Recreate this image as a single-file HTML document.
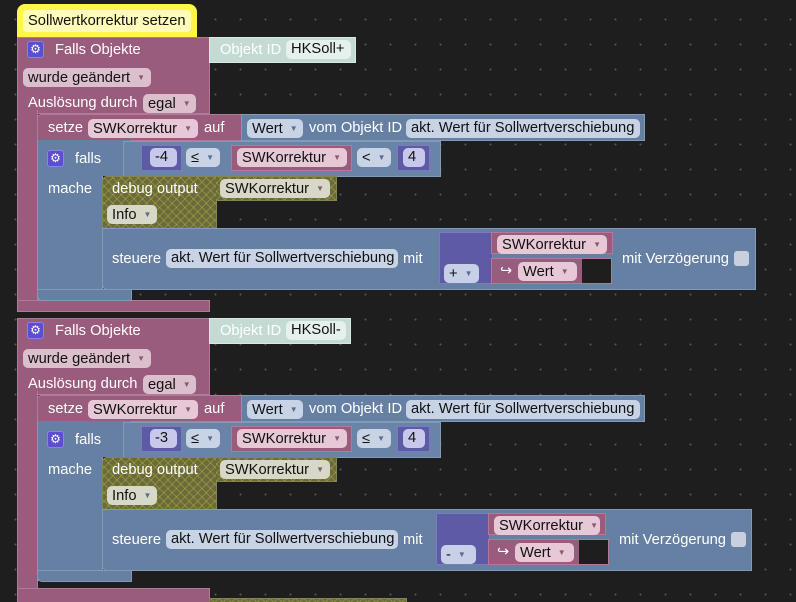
<!DOCTYPE html>
<html><head><meta charset="utf-8"><style>
*{margin:0;padding:0;box-sizing:border-box}
body{width:796px;height:602px;overflow:hidden;background:#1e1e1e;font-family:"Liberation Sans",sans-serif;font-size:14.7px;color:#fff;position:relative;
background-image:radial-gradient(circle,#555 0.8px,transparent 1.2px);background-size:25px 25px;background-position:3px 7px}
div{position:absolute}
.t{white-space:nowrap;line-height:20px}
.pk{background:#9a5c7c;border:1px solid #b27a96}
.bl{background:#6680a4;border:1px solid #8299ba}
.pu{background:#5d5ba6;border:1px solid #7b79c0}
.ol{background-color:#6a6a3c;background-image:repeating-linear-gradient(45deg,rgba(200,200,60,.35) 0 1px,transparent 1px 6px),repeating-linear-gradient(-45deg,rgba(200,200,60,.35) 0 1px,transparent 1px 6px);border:1px solid #85854f}
.f{border-radius:5px;color:#111;line-height:19px;height:19px;padding-left:5px;white-space:nowrap;overflow:hidden}
.fp{background:#e6c8d6}
.fb{background:#c8d4e6}
.fo{background:#d8d8c8}
.fg{background:#e6f0ec}
.ar{font-size:8px;color:#8a5a74;margin-left:7px;vertical-align:2px}
.ab{font-size:8px;color:#5a6d90;margin-left:7px;vertical-align:2px}
.gear{width:17px;height:17px;background:#5b4fd0;border:1px solid #8a80ee;border-radius:3px;color:#fff;font-size:12px;line-height:15px;text-align:center}
</style></head><body>

<div style="left:17px;top:4px;width:180px;height:34px;background:#fff646;border-radius:8px 8px 0 0"></div>
<div style="left:23px;top:10px;width:168px;height:22px;background:#fffbb8;border-radius:4px"></div>
<div class="t" style="left:28px;top:11px;color:#111">Sollwertkorrektur setzen</div>

<div style="left:0;top:0;width:796px;height:320px">
<div class="pk" style="left:17px;top:37px;width:193px;height:77px"></div>
<div class="pk" style="left:17px;top:110px;width:21px;height:200px;border-top:none"></div>
<div class="pk" style="left:17px;top:300px;width:193px;height:12px"></div>
<div class="gear" style="left:27px;top:41px">⚙</div>
<div class="t" style="left:55px;top:40px">Falls Objekte</div>
<div style="left:209px;top:37px;width:147px;height:26px;background:#c4dbd3;border:1px solid #d8e8e2"></div>
<div class="t" style="left:220px;top:40px">Objekt ID</div>
<div class="f fg" style="left:286px;top:40px;width:65px">HKSoll+</div>
<div class="f fp" style="left:23px;top:68px;width:128px;background:#dbbfcd">wurde geändert<span class="ar">▼</span></div>
<div class="t" style="left:28px;top:93px">Auslösung durch</div>
<div class="f fp" style="left:143px;top:94px;width:53px;background:#dbbfcd">egal<span class="ar">▼</span></div>
<div class="pk" style="left:37px;top:114px;width:205px;height:27px;border-radius:4px 0 0 0"></div>
<div class="t" style="left:48px;top:118px">setze</div>
<div class="f fp" style="left:88px;top:119px;width:110px">SWKorrektur<span class="ar">▼</span></div>
<div class="t" style="left:204px;top:118px">auf</div>
<div class="bl" style="left:241px;top:114px;width:404px;height:27px"></div>
<div class="f fb" style="left:247px;top:119px;width:56px">Wert<span class="ab">▼</span></div>
<div class="t" style="left:309px;top:118px">vom Objekt ID</div>
<div class="f fb" style="left:406px;top:119px;width:234px">akt. Wert für Sollwertverschiebung</div>
<div class="bl" style="left:37px;top:140px;width:66px;height:160px;border-top:none"></div>
<div class="bl" style="left:37px;top:140px;width:95px;height:36px;border-top:none;border-bottom:none"></div>
<div class="bl" style="left:37px;top:289px;width:95px;height:12px;border-radius:0 0 0 5px"></div>
<div class="gear" style="left:47px;top:150px">⚙</div>
<div class="t" style="left:75px;top:149px">falls</div>
<div class="t" style="left:48px;top:179px">mache</div>
<div class="bl" style="left:123px;top:141px;width:318px;height:36px;background:#6a84a8"></div>
<div class="pu" style="left:141px;top:145px;width:41px;height:26px"></div>
<div class="f" style="left:150px;top:148px;width:27px;background:#c8c8ea">-4</div>
<div class="f fb" style="left:186px;top:148px;width:34px">≤<span class="ab">▼</span></div>
<div class="pk" style="left:231px;top:145px;width:121px;height:26px"></div>
<div class="f fp" style="left:237px;top:148px;width:110px">SWKorrektur<span class="ar">▼</span></div>
<div class="f fb" style="left:357px;top:148px;width:34px">&lt;<span class="ab">▼</span></div>
<div class="pu" style="left:397px;top:145px;width:33px;height:26px"></div>
<div class="f" style="left:403px;top:148px;width:22px;background:#c8c8ea">4</div>
<div class="ol" style="left:102px;top:176px;width:115px;height:53px;border-radius:5px 0 0 0"></div>
<div class="ol" style="left:216px;top:176px;width:121px;height:25px;border-left:none"></div>
<div class="t" style="left:112px;top:179px">debug output</div>
<div class="f fo" style="left:220px;top:179px;width:110px">SWKorrektur<span class="ar">▼</span></div>
<div class="f fo" style="left:107px;top:205px;width:50px">Info<span class="ab">▼</span></div>
<div class="bl" style="left:102px;top:228px;width:654px;height:62px;border-radius:0 0 0 5px"></div>
<div class="t" style="left:112px;top:249px">steuere</div>
<div class="f fb" style="left:166px;top:249px;width:232px">akt. Wert für Sollwertverschiebung</div>
<div class="t" style="left:403px;top:249px">mit</div>
<div class="pu" style="left:439px;top:232px;width:54px;height:52px"></div>
<div class="f" style="left:444px;top:264px;width:35px;background:#c8d0e8">+<span class="ab">▼</span></div>
<div class="pk" style="left:491px;top:232px;width:122px;height:22px"></div>
<div class="f fp" style="left:497px;top:235px;width:110px">SWKorrektur<span class="ar">▼</span></div>
<div class="pk" style="left:491px;top:258px;width:92px;height:26px"></div>
<div style="left:582px;top:258px;width:30px;height:26px;background:#1e1e1e;border:1px solid #b27a96;border-left:none"></div>
<div class="t" style="left:500px;top:261px">↪</div>
<div class="f fp" style="left:518px;top:262px;width:59px">Wert<span class="ar">▼</span></div>
<div class="t" style="left:622px;top:249px">mit Verzögerung</div>
<div style="left:734px;top:251px;width:15px;height:15px;background:#c8d0e0;border-radius:3px"></div>
</div>

<div style="left:0;top:281px;width:796px;height:321px;overflow:hidden">
<div class="pk" style="left:17px;top:37px;width:193px;height:77px"></div>
<div class="pk" style="left:17px;top:110px;width:21px;height:200px;border-top:none"></div>
<div class="pk" style="left:17px;top:307px;width:193px;height:16px"></div>
<div class="gear" style="left:27px;top:41px">⚙</div>
<div class="t" style="left:55px;top:40px">Falls Objekte</div>
<div style="left:209px;top:37px;width:142px;height:26px;background:#c4dbd3;border:1px solid #d8e8e2"></div>
<div class="t" style="left:220px;top:40px">Objekt ID</div>
<div class="f fg" style="left:286px;top:40px;width:60px">HKSoll-</div>
<div class="f fp" style="left:23px;top:68px;width:128px;background:#dbbfcd">wurde geändert<span class="ar">▼</span></div>
<div class="t" style="left:28px;top:93px">Auslösung durch</div>
<div class="f fp" style="left:143px;top:94px;width:53px;background:#dbbfcd">egal<span class="ar">▼</span></div>
<div class="pk" style="left:37px;top:114px;width:205px;height:27px;border-radius:4px 0 0 0"></div>
<div class="t" style="left:48px;top:118px">setze</div>
<div class="f fp" style="left:88px;top:119px;width:110px">SWKorrektur<span class="ar">▼</span></div>
<div class="t" style="left:204px;top:118px">auf</div>
<div class="bl" style="left:241px;top:114px;width:404px;height:27px"></div>
<div class="f fb" style="left:247px;top:119px;width:56px">Wert<span class="ab">▼</span></div>
<div class="t" style="left:309px;top:118px">vom Objekt ID</div>
<div class="f fb" style="left:406px;top:119px;width:234px">akt. Wert für Sollwertverschiebung</div>
<div class="bl" style="left:37px;top:140px;width:66px;height:160px;border-top:none"></div>
<div class="bl" style="left:37px;top:140px;width:95px;height:36px;border-top:none;border-bottom:none"></div>
<div class="bl" style="left:37px;top:289px;width:95px;height:12px;border-radius:0 0 0 5px"></div>
<div class="gear" style="left:47px;top:150px">⚙</div>
<div class="t" style="left:75px;top:149px">falls</div>
<div class="t" style="left:48px;top:179px">mache</div>
<div class="bl" style="left:123px;top:141px;width:318px;height:36px;background:#6a84a8"></div>
<div class="pu" style="left:141px;top:145px;width:41px;height:26px"></div>
<div class="f" style="left:150px;top:148px;width:27px;background:#c8c8ea">-3</div>
<div class="f fb" style="left:186px;top:148px;width:34px">≤<span class="ab">▼</span></div>
<div class="pk" style="left:231px;top:145px;width:121px;height:26px"></div>
<div class="f fp" style="left:237px;top:148px;width:110px">SWKorrektur<span class="ar">▼</span></div>
<div class="f fb" style="left:357px;top:148px;width:34px">≤<span class="ab">▼</span></div>
<div class="pu" style="left:397px;top:145px;width:33px;height:26px"></div>
<div class="f" style="left:403px;top:148px;width:22px;background:#c8c8ea">4</div>
<div class="ol" style="left:102px;top:176px;width:115px;height:53px;border-radius:5px 0 0 0"></div>
<div class="ol" style="left:216px;top:176px;width:121px;height:25px;border-left:none"></div>
<div class="t" style="left:112px;top:179px">debug output</div>
<div class="f fo" style="left:220px;top:179px;width:110px">SWKorrektur<span class="ar">▼</span></div>
<div class="f fo" style="left:107px;top:205px;width:50px">Info<span class="ab">▼</span></div>
<div class="bl" style="left:102px;top:228px;width:650px;height:62px;border-radius:0 0 0 5px"></div>
<div class="t" style="left:112px;top:249px">steuere</div>
<div class="f fb" style="left:166px;top:249px;width:232px">akt. Wert für Sollwertverschiebung</div>
<div class="t" style="left:403px;top:249px">mit</div>
<div class="pu" style="left:436px;top:232px;width:54px;height:52px"></div>
<div class="f" style="left:441px;top:264px;width:35px;background:#c8d0e8">-<span class="ab">▼</span></div>
<div class="pk" style="left:488px;top:232px;width:118px;height:22px"></div>
<div class="f fp" style="left:494px;top:235px;width:106px">SWKorrektur<span class="ar">▼</span></div>
<div class="pk" style="left:488px;top:258px;width:92px;height:26px"></div>
<div style="left:579px;top:258px;width:30px;height:26px;background:#1e1e1e;border:1px solid #b27a96;border-left:none"></div>
<div class="t" style="left:497px;top:261px">↪</div>
<div class="f fp" style="left:515px;top:262px;width:59px">Wert<span class="ar">▼</span></div>
<div class="t" style="left:619px;top:249px">mit Verzögerung</div>
<div style="left:731px;top:251px;width:15px;height:15px;background:#c8d0e0;border-radius:3px"></div>
<div class="ol" style="left:209px;top:317px;width:198px;height:10px"></div>
</div>
</body></html>
